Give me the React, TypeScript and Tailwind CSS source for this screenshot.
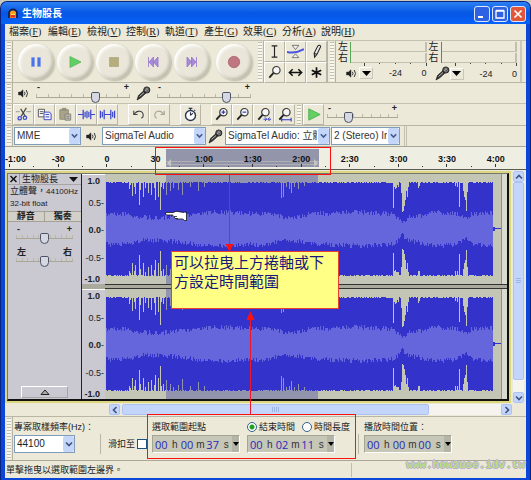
import React from "react";

const noise = (n: number) => {
  const v = Math.sin(n * 127.1 + 11.7) * 43758.5453;
  return v - Math.floor(v);
};

// Depth, in pixels, of the gaps in the peak envelope at each column.
const dips: Record<number, number> = {
  23: 6, 24: 3, 26: 14, 28: 5, 29: 12, 33: 23, 34: 8, 37: 14, 39: 5, 42: 10, 45: 12, 48: 6, 49: 18,
  52: 14, 54: 27, 55: 5, 57: 7, 60: 12, 64: 8, 67: 5, 72: 7, 76: 13, 84: 5, 92: 9, 98: 4, 175: 16,
  177: 15, 180: 5, 183: 6, 185: 11, 188: 5, 192: 7, 198: 4, 288: 26, 289: 4, 290: 7, 291: 5, 292: 3,
  293: 5, 296: 10, 297: 30, 298: 28, 299: 23, 300: 18, 301: 8, 302: 14, 303: 4, 313: 5, 314: 4,
  350: 4, 352: 5, 354: 25, 358: 8, 359: 14, 360: 18, 361: 29, 362: 10,
};

const rmsStops: [number, number][] = [
  [0, 15], [22, 15], [30, 12], [55, 11], [80, 14], [110, 17], [160, 15], [185, 11], [205, 15],
  [250, 17], [286, 15], [292, 12], [297, 6], [303, 11], [330, 17], [352, 15], [361, 10], [366, 15], [388, 16],
];

const rmsAt = (x: number) => {
  for (let i = 1; i < rmsStops.length; i++) {
    const [x1, y1] = rmsStops[i];
    const [x0, y0] = rmsStops[i - 1];
    if (x <= x1) return y0 + ((y1 - y0) * (x - x0)) / (x1 - x0);
  }
  return 15;
};

const columns = Array.from({ length: 388 }, (_, x) => x);

function envelope(peak: boolean, seed: number) {
  const height = (x: number, side: number) => {
    if (peak) return 46 + Math.round(noise(x + seed + side)) - (dips[x] ?? 0) * (side ? 0.9 : 1);
    return rmsAt(x) + (noise(x * 3 + seed + side) - 0.5) * 5;
  };
  let d = "M1 55";
  columns.forEach((x) => {
    const y = (55 - height(x, 0)).toFixed(1);
    d += `L${x + 1} ${y}H${x + 2}`;
  });
  [...columns].reverse().forEach((x) => {
    const y = (55 + height(x, 900)).toFixed(1);
    d += `L${x + 2} ${y}H${x + 1}`;
  });
  return d + "Z";
}

function Wave({ seed }: { seed: number }) {
  return (
    <svg className="block h-[110px] w-full" viewBox="0 0 403 110" preserveAspectRatio="none" shapeRendering="crispEdges">
      <rect width="403" height="110" fill="#c4c6b5" />
      <rect x="61" width="153" height="110" fill="#9294ad" />
      <rect x="397" width="6" height="110" fill="#dadbcf" />
      <path d="M397.5 0V110" stroke="#8f9184" />
      <path d={envelope(true, seed)} fill="#3333cc" />
      <path d={envelope(false, seed)} fill="#6666dc" />
      <path d="M389 53h2v1h6v1h-6v2h-2z" fill="#3333cc" />
    </svg>
  );
}

function Grip() {
  return (
    <div className="flex w-2 shrink-0 border-r border-[#b5b2a2] py-px pl-0.5">
      <div className="w-1 bg-[repeating-linear-gradient(to_bottom,#c2bfae_0_1px,#f8f7f0_1px_3px)]" />
    </div>
  );
}

function Speaker() {
  return (
    <svg className="h-[11px] w-[11px] shrink-0" viewBox="0 0 11 11" fill="none" stroke="#222">
      <path d="M0.5 4h2L5 1.8v7.4L2.5 7h-2z" fill="#222" strokeWidth=".4" />
      <path d="M6.4 3.8q1.2 1.7 0 3.4M8.2 2q2.6 3.5 0 7" strokeWidth=".9" />
    </svg>
  );
}

function Mic() {
  return (
    <svg className="h-[15px] w-[15px] shrink-0" viewBox="0 0 15 15">
      <path d="M1 14l1.5-4.5L8 4.5l2.3 2.3-5.5 5z" fill="#333" stroke="#111" strokeWidth=".6" />
      <path d="M3.5 10.5l4.8-4.2" stroke="#bbb" />
      <circle cx="10.8" cy="4" r="3.1" fill="#555" stroke="#111" strokeWidth=".8" />
      <path d="M8.8 3.5l3 2.6M9.8 2l3 2.7M9 5l3-3.4" stroke="#ccc" strokeWidth=".5" />
    </svg>
  );
}

function Slider({ label, value, ends = ["-", "+"], ticks = 9, className }: { label: string; value: number; ends?: string[]; ticks?: number; className: string }) {
  return (
    <div className={`flex flex-col ${className}`}>
      <div className="flex h-2 items-center justify-between px-px text-[9px] font-bold leading-none text-[#222]">
        <span>{ends[0]}</span>
        <span>{ends[1]}</span>
      </div>
      <div className="grid">
        <div className="flex h-[6px] items-end justify-between border-b border-[#aaa794] [grid-area:1/1]">
          {Array.from({ length: ticks }, (_, i) => (
            <i key={i} className="h-[3px] w-px bg-[#bbb8a8]" />
          ))}
        </div>
        <input
          type="range"
          aria-label={label}
          defaultValue={value}
          className="m-0 block h-[11px] w-full appearance-none bg-transparent [grid-area:1/1] [&::-webkit-slider-thumb]:h-[11px] [&::-webkit-slider-thumb]:w-[9px] [&::-webkit-slider-thumb]:appearance-none [&::-webkit-slider-thumb]:rounded-t-[2px] [&::-webkit-slider-thumb]:rounded-b-[5px] [&::-webkit-slider-thumb]:border [&::-webkit-slider-thumb]:border-[#4c5264] [&::-webkit-slider-thumb]:bg-[#d5d8e2]"
        />
      </div>
    </div>
  );
}

function Combo({ label, value, className }: { label: string; value: string; className: string }) {
  return (
    <div className={`relative shrink-0 border border-[#7f9db9] bg-white ${className}`}>
      <select aria-label={label} className="block h-4 w-full appearance-none bg-white pr-3 pl-0.5 text-[10px] leading-4 text-[#333] outline-none">
        <option>{value}</option>
      </select>
      <span className="pointer-events-none absolute inset-y-0 right-0 flex w-[11px] items-center justify-center rounded-xs bg-[#c5d6fb]">
        <svg className="h-[6px] w-[7px]" viewBox="0 0 7 6" fill="none" stroke="#425c8c" strokeWidth="1.6">
          <path d="M0.8 1.2l2.7 2.8 2.7-2.8" />
        </svg>
      </span>
    </div>
  );
}

const transport: { name: string; art: React.ReactNode }[] = [
  { name: "暫停", art: <path d="M3.5 3.5h3v9h-3zM9.5 3.5h3v9h-3z" fill="#4a72ea" stroke="#7b97ea" strokeWidth=".5" /> },
  { name: "播放", art: <path d="M3 2.5L14 8 3 13.5z" fill="#62cf62" stroke="#4dae55" strokeWidth=".7" /> },
  { name: "停止", art: <path d="M3.5 3.5h9v9h-9z" fill="#b6ad7d" stroke="#a59d72" strokeWidth=".6" /> },
  { name: "跳至開頭", art: <path d="M3.5 3v10M8.5 3v10L4 8zM13 3v10L8.5 8z" fill="#a78ad8" stroke="#9374cc" strokeWidth=".8" /> },
  { name: "跳至結尾", art: <path d="M12.5 3v10M3 3v10L7.5 8zM7.5 3v10L12 8z" fill="#a78ad8" stroke="#9374cc" strokeWidth=".8" /> },
  { name: "錄音", art: <circle cx="8" cy="8" r="5.7" fill="#bf7680" stroke="#a96470" strokeWidth=".8" /> },
];

const lens = (
  <>
    <path d="M3.5 14.5L8 9.5" stroke="#222" strokeWidth="2" />
    <circle cx="11" cy="6.5" r="3.9" fill="#f6f6f4" stroke="#333" strokeWidth="1.2" />
  </>
);

const tools: { name: string; art: React.ReactNode }[] = [
  { name: "選取工具", art: <path d="M6 3h6M6 15h6M9 3v12" stroke="#222" strokeWidth="1.2" /> },
  {
    name: "包絡線工具",
    art: (
      <>
        <path d="M5.5 2.5h7L9 7zM5.5 15.5h7L9 11.5z" fill="#f4f4ee" stroke="#555" strokeWidth=".8" />
        <path d="M0 9.500q9 2 18-3" stroke="#4a52e0" strokeWidth="2" />
      </>
    ),
  },
  { name: "繪製工具", art: <path d="M7 15l-.5-4 4-8q2-1.500 3 .8l-4 8.200zM6.800 11.200l2.600.8" fill="#eee" stroke="#222" strokeWidth="1.1" /> },
  { name: "縮放工具", art: lens },
  { name: "時間軸工具", art: <path d="M3 9h12M6 5.500L2.500 9 6 12.500M12 5.500L15.500 9 12 12.500" stroke="#111" strokeWidth="1.6" /> },
  { name: "多功能工具", art: <path d="M9 3.500v11M4 6.500l10 5M14 6.500l-10 5" stroke="#111" strokeWidth="1.8" /> },
];

const editGroups: { name: string; art: React.ReactNode }[][] = [
  [
    { name: "剪下", art: <><path d="M1 6h4M12 6h5" stroke="#999" /><path d="M12 2L6.500 11M6 3l5 8" stroke="#444" strokeWidth="1.2" /><circle cx="5" cy="13" r="1.800" stroke="#3a48cc" strokeWidth="1.3" /><circle cx="10.500" cy="12.500" r="1.800" stroke="#3a48cc" strokeWidth="1.3" /></> },
    { name: "複製", art: <><path d="M2.500 3.500h6.500v8h-6.500zM4 6h4M4 8h4" fill="#fafafa" stroke="#555" /><path d="M8.500 6.500h6l1.500 2v6h-7.500zM10 9h4M10 11.500h4" fill="#f2f2ff" stroke="#3844c4" /></> },
    { name: "貼上", art: <><path d="M3 4h9v10H3zM5.500 2.500h4v2h-4z" fill="#a8a488" stroke="#8e8b78" /><path d="M8.500 8.500h6v6.500h-6zM10 11h3M10 13h3" fill="#bcbab0" stroke="#86847c" /></> },
    { name: "修剪", art: <path d="M0 9h5M13 9h5M5.500 4v10M7.500 6v6M9.500 5v8M11.500 6v6M13.500 4v10" stroke="#3a44cc" strokeWidth="1.3" /> },
    { name: "靜音", art: <path d="M1.500 5v8M3.500 6v6M5.500 4v10M6 9h6M12.500 4v10M14.500 6v6M16.500 5v8" stroke="#3a44cc" strokeWidth="1.3" /> },
  ],
  [
    { name: "復原", art: <path d="M4 5v4h4M4.500 8.500Q7 5 10.500 5.500T14 10q0 2-2 3" stroke="#444" strokeWidth="1.2" /> },
    { name: "重做", art: <path d="M14 5v4h-4M13.500 8.500Q11 5 7.500 5.500T4 10q0 2 2 3" stroke="#a6a496" strokeWidth="1.2" /> },
  ],
  [{ name: "同步鎖定", art: <><circle cx="9" cy="10" r="5.300" fill="#fff" stroke="#2d3850" strokeWidth="1.500" /><path d="M7 2.500h4M9 2.500V5M9 10l2.500-2.500M9 6.500V10M13 5l1 -1" stroke="#2d3850" strokeWidth="1.200" /></> }],
  [
    { name: "放大", art: <>{lens}<path d="M9 6.500h4M11 4.500v4" stroke="#2d38c8" strokeWidth="1.200" /></> },
    { name: "縮小", art: <>{lens}<path d="M9 6.500h4" stroke="#2d38c8" strokeWidth="1.200" /></> },
    { name: "符合選取範圍", art: <>{lens}<path d="M9 14h3M14 14h3M10.500 12l2 2-2 2M15.500 12l-2 2 2 2" stroke="#2d38c8" /></> },
    { name: "符合專案", art: <>{lens}<path d="M6 14.500h10M6 12.500v4M16 12.500v4" stroke="#2d38c8" strokeWidth="1.200" /></> },
  ],
];

function ToolButton({ name, art }: { name: string; art: React.ReactNode }) {
  return (
    <button aria-label={name} className="flex h-[21px] w-[21px] shrink-0 items-center justify-center border-r border-b border-[#b9b6a7] border-t border-l border-t-white border-l-white">
      <svg className="h-[17px] w-[17px]" viewBox="0 0 18 18" fill="none">
        {art}
      </svg>
    </button>
  );
}

function Meter({ color, children, name }: { color: string; children: React.ReactNode; name: string }) {
  return (
    <div className="flex min-w-0 flex-1 flex-col pr-px">
      <div className="flex gap-px">
        <div className="flex w-[11px] flex-col text-[10px] leading-[11px] text-[#222]">
          <span>左</span>
          <span>右</span>
        </div>
        <div className={`mt-px flex flex-1 flex-col gap-px border-l ${color}`}>
          <div className="h-[10px] border-r-2 border-b border-r-[#c2bfb0] border-b-[#c2bfb0]" />
          <div className="h-[10px] border-r-2 border-b border-r-[#c2bfb0] border-b-[#c2bfb0]" />
        </div>
      </div>
      <div className="ml-[26px] flex h-[3px] justify-between">
        <i className="h-[3px] w-px bg-[#444]" />
        <i className="h-px w-px bg-[#444]" />
        <i className="h-px w-px bg-[#444]" />
        <i className="h-px w-px bg-[#444]" />
        <i className="h-[3px] w-px bg-[#444]" />
      </div>
      <div className="flex items-center pl-[6px] text-[9px] leading-[14px] text-[#222]">
        <span className="flex w-[15px] justify-center">{children}</span>
        <button aria-label={name} className="flex h-[12px] w-[14px] items-center justify-center border border-[#c9c6b7] border-t-white border-l-white">
          <svg className="h-[5px] w-[9px]" viewBox="0 0 9 5"><path d="M0 0h9L4.500 5z" fill="#000" /></svg>
        </button>
        <span className="ml-4">-24</span>
        <span className="ml-auto">0</span>
      </div>
    </div>
  );
}

const scrollButton = "flex shrink-0 items-center justify-center rounded-xs border border-[#aec2f2] bg-[#c4d5fc]";

function Chevron({ d }: { d: string }) {
  return (
    <svg className="h-[8px] w-[8px]" viewBox="0 0 8 8" fill="none" stroke="#40557f" strokeWidth="1.700">
      <path d={d} />
    </svg>
  );
}

const rulerTicks = Array.from({ length: 21 }, (_, i) => i);

function Ruler() {
  return (
    <div className="relative h-[23px] shrink-0 overflow-hidden border-b border-[#5a5a50] bg-[#efeee3]">
      <div className="absolute top-0.5 bottom-0.5 left-[161px] w-[153px] bg-[#9395ab]">
        <div className="mt-3 h-1 border-t border-b border-[#b0b0b4]" />
        <svg className="absolute top-[10px] left-0 h-[8px] w-full" viewBox="0 0 153 8">
          <path d="M5 0v8L1 4zM148 0v8l4-4z" fill="#c5c5c2" />
        </svg>
      </div>
      <svg className="absolute inset-x-0 bottom-0.5 h-[3px] w-full" viewBox="0 0 521 3" preserveAspectRatio="none" shapeRendering="crispEdges">
        {rulerTicks.map((i) => (
          <rect key={i} x={Math.round(4 + i * 24.3)} y={i % 2 ? 2 : 0} width="1" height="3" fill="#333" />
        ))}
      </svg>
      <div className="relative flex pt-[7px] pr-[6px] text-center text-[9px] font-bold leading-[11px] text-[#111]">
        <span className="w-[29px] text-left">-1:00</span>
        {["-30", "0", "30", "1:00", "1:30", "2:00", "2:30", "3:00", "3:30", "4:00"].map((t) => (
          <span key={t} className="flex-1">{t}</span>
        ))}
      </div>
    </div>
  );
}

function Scale() {
  return (
    <div className="grid h-[110px] grid-rows-[12px_32px_22px_34px_9px] items-center border-t border-white bg-[#cac8d1] text-right text-[9px] leading-[9px] text-[#222]">
      <span className="pr-[5px] font-bold">1.0</span>
      <span className="pr-px">0.5-</span>
      <span className="pr-px"><b>0.0</b>-</span>
      <span className="pr-px">-0.5-</span>
      <span className="pr-[5px] font-bold">-1.0</span>
    </div>
  );
}

function TimeBox({ label, parts }: { label: string; parts: [string, string][] }) {
  return (
    <div role="group" aria-label={label} className="flex h-[18px] w-[88px] items-center border border-[#a5a596] border-r-white border-b-white bg-[#c6c7b7] pl-0.5">
      {parts.map(([n, u]) => (
        <label key={u} className="flex flex-1 items-center">
          <input defaultValue={n} className="w-[14px] bg-transparent p-0 font-['Open_Sans',sans-serif] text-[11px] leading-[15px] text-[#2929b8] outline-none" />
          <span className="flex-1 text-center text-[10px] leading-[15px] text-[#333]">{u}</span>
        </label>
      ))}
      <button aria-label={`${label}格式`} className="flex h-[16px] w-[7px] items-center justify-center bg-[#b4b5a6]">
        <svg className="h-1 w-[6px]" viewBox="0 0 6 4"><path d="M0 0h6L3 4z" fill="#000" /></svg>
      </button>
    </div>
  );
}

const menus = [["檔案", "F"], ["編輯", "E"], ["檢視", "V"], ["控制", "R"], ["軌道", "T"], ["產生", "G"], ["效果", "C"], ["分析", "A"], ["說明", "H"]];

const caption = "flex h-4 w-4 items-center justify-center rounded-[3px] border border-[#dfe8fa]";
const sans = "font-['Liberation_Sans','Noto_Sans_CJK_TC',sans-serif]";

export default function App() {
  return (
    <div className={`relative bg-[#c9cabb] pt-0.5 ${sans}`}>
      <div className="mx-px flex flex-col rounded-t-md border-x-4 border-b-4 border-[#0b46d8] bg-[#ece9d8] ring-1 ring-[#0a2482]">
        <header className="-mx-1 flex h-[22px] shrink-0 items-center gap-[3px] rounded-t-md bg-linear-to-b from-[#2b80f2] via-[#0656e4] to-[#0662f8] pt-0.5 pr-1 pl-[6px]">
          <svg className="h-3 w-3" viewBox="0 0 12 12">
            <path d="M2 10V5.500a4 4 0 018 0V10" fill="#f3a21d" stroke="#101c58" strokeWidth="1.800" />
            <path d="M3.500 6.500h5v3h-5z" fill="#e5342a" />
            <path d="M4 6.500h4" stroke="#ffe75a" />
          </svg>
          <h1 className="flex-1 text-[10px] font-bold leading-4 text-white">生物股長</h1>
          <div className="flex gap-0.5">
            <button aria-label="最小化" className={`${caption} bg-[#2f62e2]`}>
              <svg className="h-2.5 w-2.5" viewBox="0 0 10 10"><path d="M1 7h5v2H1z" fill="#fff" /></svg>
            </button>
            <button aria-label="最大化" className={`${caption} bg-[#2f62e2]`}>
              <svg className="h-2.5 w-2.5" viewBox="0 0 10 10"><path d="M1 2h8v7H1zM1 1.500h8" fill="none" stroke="#fff" strokeWidth="1.300" /></svg>
            </button>
            <button aria-label="關閉" className={`${caption} bg-[#e2573a]`}>
              <svg className="h-2.5 w-2.5" viewBox="0 0 10 10"><path d="M1.500 1.500l7 7M8.500 1.500l-7 7" stroke="#fff" strokeWidth="1.700" /></svg>
            </button>
          </div>
        </header>

        <nav className="flex h-4 shrink-0 items-center gap-[7px] pl-1 font-['Liberation_Serif','Noto_Sans_CJK_TC',serif] text-[10px] leading-4 text-[#222]">
          {menus.map(([name, key]) => (
            <button key={name} className="w-8 whitespace-nowrap text-left">
              {name}(<u>{key}</u>)
            </button>
          ))}
        </nav>

        <div className="flex h-[43px] shrink-0 border-y border-t-[#c4c1b1] border-b-[#b9b6a6]">
          <Grip />
          <div className="flex items-center gap-[3px] pr-1 pl-[5px]">
            {transport.map(({ name, art }, i) => (
              <button key={name} aria-label={name} className={`flex h-9 w-9 items-center justify-center rounded-full bg-[#eae7da] shadow-[inset_2px_2px_3px_#fff,inset_-2px_-2px_3px_#bfbcac,1px_1px_2px_#bab7a6] ${i === 5 ? "ml-[3px]" : ""}`}>
                <svg className="h-4 w-4" viewBox="0 0 16 16">{art}</svg>
              </button>
            ))}
          </div>
          <Grip />
          <div className="grid grid-cols-3 border-r border-[#b5b2a2]">
            {tools.map((t) => <ToolButton key={t.name} {...t} />)}
          </div>
          <Grip />
          <div className="flex flex-1 gap-px pl-0.5">
            <Meter color="border-l-[#57a957]" name="輸出音量表"><Speaker /></Meter>
            <Meter color="border-l-[#b95a5a]" name="輸入音量表"><Mic /></Meter>
          </div>
          <div className="ml-0.5 w-1.5 border-l-2 border-[#cbc8b8]" />
        </div>

        <div className="flex h-[21px] shrink-0 items-center border-b border-[#c4c1b1]">
          <div className="flex self-stretch"><Grip /></div>
          <div className="flex items-center pl-[5px]">
            <Speaker />
            <Slider label="輸出音量" value={65} className="ml-[7px] w-[94px]" />
            <div className="mx-1.5"><Mic /></div>
            <Slider label="輸入音量" value={77} className="w-[94px]" />
          </div>
        </div>

        <div className="flex h-[22px] shrink-0 border-b border-[#b9b6a6]">
          <Grip />
          <div className="flex gap-[10px]">
            {editGroups.map((group) => (
              <div key={group[0].name} className="flex">
                {group.map((t) => <ToolButton key={t.name} {...t} />)}
              </div>
            ))}
          </div>
          <Grip />
          <ToolButton name="以指定速度播放" art={<path d="M4 3l12 6-12 6z" fill="#62d162" stroke="#50b056" />} />
          <Slider label="播放速度" value={27} className="ml-[3px] w-[71px]" />
        </div>

        <div className="flex h-[21px] shrink-0 items-center border-b border-[#a9a698]">
          <div className="flex self-stretch"><Grip /></div>
          <Combo label="音訊主機" value="MME" className="ml-px w-[67px]" />
          <span className="mx-[5px]"><Speaker /></span>
          <Combo label="輸出裝置" value="SigmaTel Audio" className="w-[104px]" />
          <span className="mx-0.5"><Mic /></span>
          <Combo label="輸入裝置" value="SigmaTel Audio: 立體聲" className="w-[105px]" />
          <Combo label="輸入聲道" value="2 (Stereo) Input" className="ml-px w-[69px]" />
          <div className="ml-1 w-[3px] self-stretch border-x border-[#c4c1b1]" />
        </div>

        <Ruler />

        <div className="flex shrink-0 bg-[#e9e9dc]">
          <main className="mt-px flex min-w-0 flex-1 border-2 border-[#dcd77c]">
            <div className="flex min-w-0 flex-1 border-t border-l border-r-2 border-b-2 border-[#111] border-t-[#777] border-l-[#777]">
              <aside className="flex w-[74px] shrink-0 flex-col border-r border-[#222] bg-[#cac8d1] text-[9px] text-[#222]">
                <div className="flex h-[11px] items-center border-b border-[#a7a5a8] leading-[10px]">
                  <button aria-label="關閉軌道" className="flex w-3 justify-center border-r border-[#999]">
                    <svg className="h-[10px] w-[7px]" viewBox="0 0 7 10"><path d="M0.500 2l6 6M6.500 2l-6 6" stroke="#111" strokeWidth="1.500" /></svg>
                  </button>
                  <button className="flex flex-1 items-center justify-between pr-[3px] pl-0.5">
                    生物股長
                    <svg className="h-[5px] w-[9px]" viewBox="0 0 9 5"><path d="M0 0h9L4.500 5z" fill="#111" /></svg>
                  </button>
                </div>
                <p className="whitespace-nowrap pl-0.5 leading-[13px]">立體聲，<span className="text-[8px]">44100Hz</span></p>
                <p className="pb-px pl-0.5 text-[8px] leading-[12px]">32-bit float</p>
                <div className="grid grid-cols-2 border-y border-[#a4a296] bg-[#d3d0ca] font-bold leading-[9px]">
                  <button className="border-r border-[#a4a296]">靜音</button>
                  <button>獨奏</button>
                </div>
                <Slider label="增益" value={50} ticks={11} className="mx-2 mt-[3px]" />
                <Slider label="聲道平衡" value={50} ticks={11} ends={["左", "右"]} className="mx-2 mt-1" />
                <button aria-label="收合軌道" className="mx-auto mt-auto mb-px flex h-[12px] w-[47px] items-center justify-center border border-[#a7a5a8] border-t-white border-l-white">
                  <svg className="h-[6px] w-[10px]" viewBox="0 0 10 6"><path d="M1 5.500h8L5 1z" fill="#aaa" stroke="#222" /></svg>
                </button>
              </aside>
              <div className="flex w-[23px] shrink-0 flex-col gap-[5px] bg-[#aaaa9d]">
                <Scale />
                <Scale />
              </div>
              <div className="flex min-w-0 flex-1 flex-col">
                <Wave seed={0} />
                <div className="h-[5px] border-y border-[#333] bg-[#a9aa9d]" />
                <Wave seed={0} />
              </div>
            </div>
          </main>
          <div className="mt-px mr-0.5 ml-0.5 flex w-[11px] flex-col bg-[#f4f3ee]">
            <button aria-label="向上捲動" className={`h-[11px] ${scrollButton}`}><Chevron d="M1 5.500l3-3 3 3" /></button>
            <div className="flex flex-[16] flex-col items-center justify-center gap-px rounded-xs border border-[#aec2f2] bg-[#c4d5fc]">
              {[0, 1, 2].map((i) => <i key={i} className="h-px w-[5px] bg-[#9db4e6]" />)}
            </div>
            <div className="flex-1" />
            <button aria-label="向下捲動" className={`h-[11px] ${scrollButton}`}><Chevron d="M1 2.500l3 3 3-3" /></button>
          </div>
        </div>

        <div className="flex h-[14px] shrink-0 items-center border-b border-[#b9b6a6] pr-[14px] pl-[104px]">
          <button aria-label="向左捲動" className={`h-[11px] w-[11px] ${scrollButton}`}><Chevron d="M5.500 1l-3 3 3 3" /></button>
          <div className="ml-0.5 flex h-[11px] flex-1 bg-[#f4f3ee]">
            <div className="flex w-[81%] items-center justify-center gap-px rounded-xs border border-[#aec2f2] bg-[#c4d5fc]">
              {[0, 1, 2, 3].map((i) => <i key={i} className="h-[5px] w-px bg-[#9db4e6]" />)}
            </div>
          </div>
          <button aria-label="向右捲動" className={`h-[11px] w-[11px] ${scrollButton}`}><Chevron d="M2.500 1l3 3-3 3" /></button>
        </div>

        <div className="flex h-11 shrink-0 border-b border-[#aaa797] text-[9px] leading-[12px] text-[#222]">
          <Grip />
          <div className="flex w-[87px] flex-col gap-0.5 pt-[4px] pl-px">
            <label htmlFor="rate" className="whitespace-nowrap">專案取樣頻率(Hz)：</label>
            <div className="relative w-[61px] border border-[#7f9db9] bg-white">
              <select id="rate" className="block h-4 w-full appearance-none bg-white pl-0.5 text-[10px] leading-4 outline-none">
                <option>44100</option>
              </select>
              <span className="pointer-events-none absolute inset-y-0 right-0 flex w-[11px] items-center justify-center rounded-xs bg-[#c5d6fb]">
                <Chevron d="M1 2.500l3 3 3-3" />
              </span>
            </div>
          </div>
          <label className="mt-[17px] mb-[6px] flex items-center gap-0.5 border-l border-[#b9b6a6] pl-[7px]">
            滑扣至
            <input type="checkbox" className="h-[10px] w-[10px] appearance-none border border-[#1c5180] bg-white" />
          </label>
          <div className="flex flex-col gap-0.5 pt-[4px] pl-[5px]">
            <span>選取範圍起點</span>
            <TimeBox label="選取範圍起點" parts={[["00", "h"], ["00", "m"], ["37", "s"]]} />
          </div>
          <fieldset className="flex w-[112px] shrink-0 flex-col gap-0.5 pt-[4px] pl-[7px]">
            <div className="flex gap-[7px]">
              <label className="flex items-center gap-0.5 whitespace-nowrap">
                <input type="radio" name="end" defaultChecked className="h-[10px] w-[10px] appearance-none rounded-full border border-[#37608a] bg-white checked:bg-[radial-gradient(#21a121_2px,#fff_3px)]" />
                結束時間
              </label>
              <label className="flex items-center gap-0.5 whitespace-nowrap">
                <input type="radio" name="end" className="h-[10px] w-[10px] appearance-none rounded-full border border-[#37608a] bg-white" />
                時間長度
              </label>
            </div>
            <TimeBox label="結束時間" parts={[["00", "h"], ["02", "m"], ["11", "s"]]} />
          </fieldset>
          <div className="mt-[17px] mb-[6px] ml-[6px] w-px bg-[#b9b6a6]" />
          <div className="flex flex-col gap-0.5 pt-[4px] pl-[5px]">
            <span className="whitespace-nowrap">播放時間位置：</span>
            <TimeBox label="播放時間位置" parts={[["00", "h"], ["00", "m"], ["00", "s"]]} />
          </div>
        </div>

        <footer className="flex h-[17px] shrink-0 items-center text-[9px] leading-[14px] text-[#222]">
          <p className="w-[347px] border-r border-[#c0bdad] pl-px">單擊拖曳以選取範圍左邊界。</p>
        </footer>
      </div>

      <div className="pointer-events-none absolute top-[147px] left-[155px] h-7 w-44 border border-[#ff1010]" />
      <div className="pointer-events-none absolute top-[414px] left-[147px] h-[45px] w-[209px] border border-[#ff1010]" />
      <svg className="pointer-events-none absolute top-[174px] left-[225px] h-[240px] w-[30px]" viewBox="0 0 30 240">
        <path d="M4.500 0v72M25.500 240V140" stroke="#f01828" />
        <path d="M0.500 70h8l-4 8zM21.500 146h8l-4-9z" fill="#ff1010" />
      </svg>
      <svg className="pointer-events-none absolute top-[210px] left-[165px] h-3 w-[23px]" viewBox="0 0 23 12">
        <path d="M1 2.500h7.500L11 1.500l8 1h2.500v7.500H19l-1-1h-6.500L9.500 7.500 7 5H1z" fill="#fff" />
        <path d="M1 2.500Q0 3.700 1.500 5H8M1 2.500h7.500l2.500-1.300 8 1.300M7.500 5l1.200 1.500h3.300M9 6.800l1 1.700h3M11 9h7l1 1.300M19.500 2h2v8.500h-2" fill="none" stroke="#1a1a1a" strokeWidth=".8" />
      </svg>
      <p className="absolute top-[251px] left-[171px] h-[58px] w-[168px] border border-[#e84030] bg-[#ffff85] px-0.5 py-px text-[15px] leading-[19px] text-[#17177c]">可以拉曳上方捲軸或下方設定時間範圍</p>
      <p className="absolute right-[6px] bottom-[10px] font-['Liberation_Mono',monospace] text-[11px] font-bold leading-[13px] text-[#b9e07c] [text-shadow:-1px_0_#b9abd6,1px_0_#b9abd6,0_1px_#b9abd6,0_-1px_#b9abd6]">www.how2use.idv.tw</p>
    </div>
  );
}
